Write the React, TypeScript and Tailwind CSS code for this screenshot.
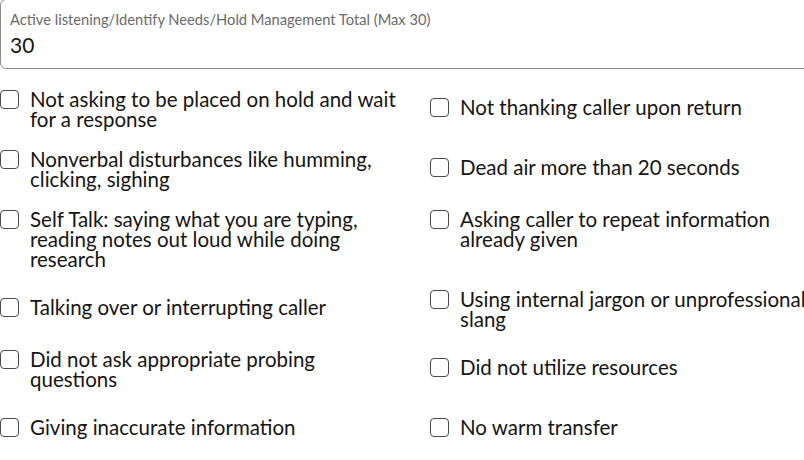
import { useState } from "react";

const ROWS: [string, string][] = [
  ["Not asking to be placed on hold and wait for a response", "Not thanking caller upon return"],
  ["Nonverbal disturbances like humming, clicking, sighing", "Dead air more than 20 seconds"],
  ["Self Talk: saying what you are typing, reading notes out loud while doing research", "Asking caller to repeat information already given"],
  ["Talking over or interrupting caller", "Using internal jargon or unprofessional slang"],
  ["Did not ask appropriate probing questions", "Did not utilize resources"],
  ["Giving inaccurate information", "No warm transfer"],
];

const font = { fontFamily: "Lato, 'Noto Sans', sans-serif" };

const Check = ({ text }: { text: string }) => {
  const [on, setOn] = useState(false);
  return (
    <label className="flex min-h-9 items-center cursor-pointer">
      <span className="flex items-start gap-[11px]">
        <span
          onClick={() => setOn(!on)}
          className={`mt-[1px] w-[19px] h-[19px] shrink-0 rounded-[4px] border border-[#4a4a4a] ${on ? "bg-[#227e9e]" : "bg-white"}`}
        />
        <span className="w-[375px] text-[20.5px] leading-[20px] text-[#161513]">{text}</span>
      </span>
    </label>
  );
};

export default function App() {
  return (
    <div className="w-[804px] h-[460px] overflow-hidden bg-white" style={font}>
      <div className="w-[880px]">
        {/* Total field */}
        <div className="-mt-px h-[70px] rounded-[6px] border border-[#8c8c8c] pl-[9px] pt-[10px]">
          <div className="text-[14.7px] leading-[18px] text-[#6b6b6b]">
            Active listening/Identify Needs/Hold Management Total (Max 30)
          </div>
          <div className="mt-[5px] text-[21px] leading-[24px] text-[#161513]">30</div>
        </div>

        {/* Checklist */}
        <div className="mt-5 grid grid-cols-[430px_430px] items-start gap-y-5">
          {ROWS.map(([a, b], i) => (
            <div key={i} className="contents">
              <Check text={a} />
              <Check text={b} />
            </div>
          ))}
        </div>
      </div>
    </div>
  );
}
